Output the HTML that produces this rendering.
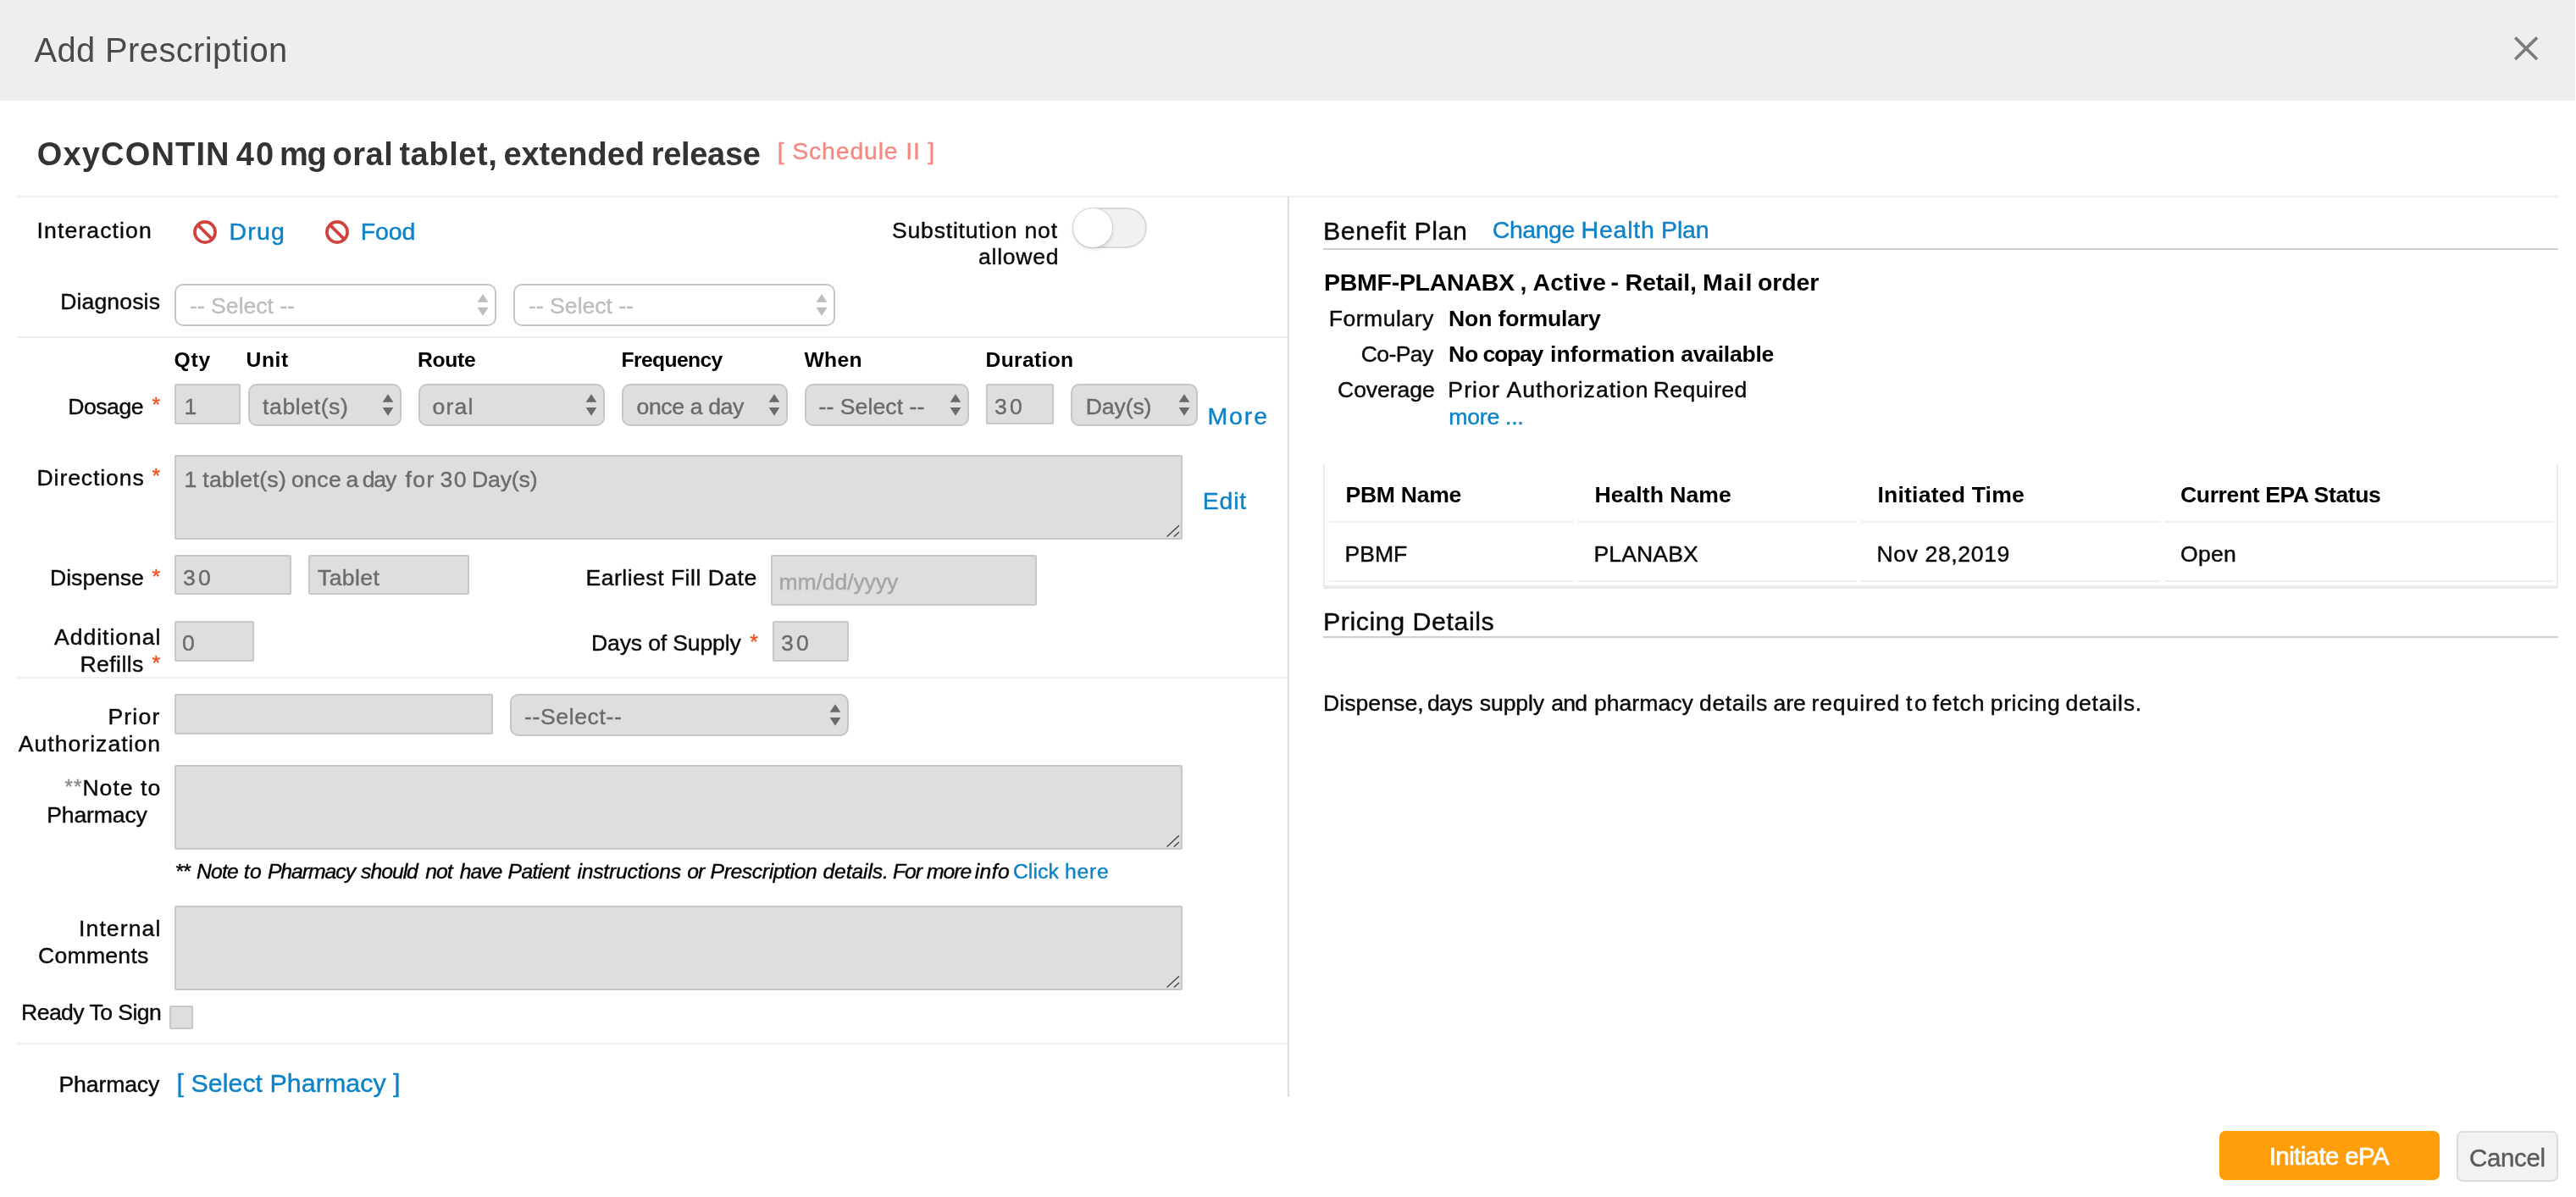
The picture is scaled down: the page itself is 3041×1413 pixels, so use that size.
<!DOCTYPE html>
<html><head><meta charset="utf-8"><title>Add Prescription</title>
<style>
html,body{margin:0;padding:0;background:#fff;}
body{width:3041px;height:1413px;position:relative;overflow:hidden;font-family:"Liberation Sans",sans-serif;}
#root{position:absolute;left:0;top:0;width:3041px;height:1413px;will-change:transform;}
.t{position:absolute;white-space:pre;-webkit-text-stroke:0.4px currentColor;}
.a,.hdr,.hl,.hl2,.vl,.ul,.inp,.wsel,.gsel,.tbl,.cl,.bt1,.bt2{position:absolute;box-sizing:border-box;}
.hdr{background:#eeeeee;}
.hl{background:#eeeeee;}
.hl2{background:#eeeef4;}
.vl{background:#dddddd;}
.ul{background:#cfcfcf;}
.inp{background:#dedede;border:2px solid #c7c7c7;border-radius:2px;}
.wsel{background:#fff;border:2px solid #c6c6c6;border-radius:10px;}
.gsel{background:#dedede;border:2px solid #c6c6c6;border-radius:10px;}
.tog{background:#f1f1f1;border:2px solid #d8d8d8;border-radius:24px;}
.knob{position:absolute;left:-1px;top:-1px;width:45.5px;height:45.5px;border-radius:50%;background:#fff;box-shadow:0 2px 5px rgba(0,0,0,.15),0 0 0 1px #dedede;}
.tbl{border-left:2px solid #ececec;border-right:2px solid #ececec;border-bottom:4px solid #ebebeb;}
.cl{background:#efefef;}
.bt1{background:#ff9e08;border-radius:7px;}
.bt2{background:#f2f2f2;border:2px solid #dcdcdc;border-radius:7px;}
</style></head><body><div id="root">
<div class="hdr" style="left:0px;top:0px;width:3040px;height:119px;"></div>
<svg class="a" style="left:2962px;top:37px" width="40" height="40" viewBox="0 0 40 40"><path d="M7.2 7.4 L33 33 M33 7.4 L7.2 33" stroke="#7b7b7b" stroke-width="3.6" fill="none"/></svg>
<div class="hl" style="left:20px;top:231px;width:3000px;height:2px;"></div>
<div class="hl2" style="left:20px;top:397px;width:1500px;height:2px;"></div>
<div class="hl" style="left:20px;top:799px;width:1500px;height:2px;"></div>
<div class="hl" style="left:20px;top:1231px;width:1500px;height:2px;"></div>
<div class="vl" style="left:1520px;top:232px;width:2px;height:1063px;"></div>
<svg class="a" style="left:226px;top:258px" width="32" height="32" viewBox="0 0 32 32"><circle cx="16" cy="16" r="12.1" fill="none" stroke="#d2423c" stroke-width="3.7"/><path d="M7.6 7.6 L24.4 24.4" stroke="#d2423c" stroke-width="3.7"/></svg>
<svg class="a" style="left:382px;top:258px" width="32" height="32" viewBox="0 0 32 32"><circle cx="16" cy="16" r="12.1" fill="none" stroke="#d2423c" stroke-width="3.7"/><path d="M7.6 7.6 L24.4 24.4" stroke="#d2423c" stroke-width="3.7"/></svg>
<div class="a tog" style="left:1266px;top:245px;width:87.5px;height:47.5px"><div class="knob"></div></div>
<div class="wsel" style="left:206px;top:335px;width:380px;height:50px;"></div><svg class="a" style="left:562px;top:346.0px" width="16" height="28" viewBox="0 0 16 28"><path d="M8 1.2 L14.4 10.8 L1.6 10.8 Z M8 26.8 L14.4 17 L1.6 17 Z" fill="#bdbdbd"/></svg>
<div class="wsel" style="left:606px;top:335px;width:380px;height:50px;"></div><svg class="a" style="left:962px;top:346.0px" width="16" height="28" viewBox="0 0 16 28"><path d="M8 1.2 L14.4 10.8 L1.6 10.8 Z M8 26.8 L14.4 17 L1.6 17 Z" fill="#bdbdbd"/></svg>
<div class="inp" style="left:206px;top:453px;width:78px;height:48px;"></div>
<div class="gsel" style="left:293px;top:453px;width:181px;height:50px;"></div><svg class="a" style="left:450px;top:464.0px" width="16" height="28" viewBox="0 0 16 28"><path d="M8 1.2 L14.4 10.8 L1.6 10.8 Z M8 26.8 L14.4 17 L1.6 17 Z" fill="#6a6a6a"/></svg>
<div class="gsel" style="left:494px;top:453px;width:220px;height:50px;"></div><svg class="a" style="left:690px;top:464.0px" width="16" height="28" viewBox="0 0 16 28"><path d="M8 1.2 L14.4 10.8 L1.6 10.8 Z M8 26.8 L14.4 17 L1.6 17 Z" fill="#6a6a6a"/></svg>
<div class="gsel" style="left:734px;top:453px;width:196px;height:50px;"></div><svg class="a" style="left:906px;top:464.0px" width="16" height="28" viewBox="0 0 16 28"><path d="M8 1.2 L14.4 10.8 L1.6 10.8 Z M8 26.8 L14.4 17 L1.6 17 Z" fill="#6a6a6a"/></svg>
<div class="gsel" style="left:950px;top:453px;width:194px;height:50px;"></div><svg class="a" style="left:1120px;top:464.0px" width="16" height="28" viewBox="0 0 16 28"><path d="M8 1.2 L14.4 10.8 L1.6 10.8 Z M8 26.8 L14.4 17 L1.6 17 Z" fill="#6a6a6a"/></svg>
<div class="inp" style="left:1164px;top:453px;width:80px;height:48px;"></div>
<div class="gsel" style="left:1264px;top:453px;width:150px;height:50px;"></div><svg class="a" style="left:1390px;top:464.0px" width="16" height="28" viewBox="0 0 16 28"><path d="M8 1.2 L14.4 10.8 L1.6 10.8 Z M8 26.8 L14.4 17 L1.6 17 Z" fill="#6a6a6a"/></svg>
<div class="inp" style="left:206px;top:537px;width:1190px;height:100px;"></div><svg class="a" style="left:1375px;top:616px" width="20" height="20" viewBox="0 0 20 20"><path d="M2.6 17.6 L17 4.3 M10.9 17.6 L17 12.1" stroke="#444" stroke-width="1.4" fill="none"/></svg>
<div class="inp" style="left:206px;top:655px;width:138px;height:47px;"></div>
<div class="inp" style="left:364px;top:655px;width:190px;height:47px;"></div>
<div class="inp" style="left:910px;top:655px;width:314px;height:60px;"></div>
<div class="inp" style="left:206px;top:733px;width:94px;height:48px;"></div>
<div class="inp" style="left:912px;top:733px;width:90px;height:48px;"></div>
<div class="inp" style="left:206px;top:819px;width:376px;height:48px;"></div>
<div class="gsel" style="left:602px;top:819px;width:400px;height:50px;"></div><svg class="a" style="left:978px;top:830.0px" width="16" height="28" viewBox="0 0 16 28"><path d="M8 1.2 L14.4 10.8 L1.6 10.8 Z M8 26.8 L14.4 17 L1.6 17 Z" fill="#6a6a6a"/></svg>
<div class="inp" style="left:206px;top:903px;width:1190px;height:100px;"></div><svg class="a" style="left:1375px;top:982px" width="20" height="20" viewBox="0 0 20 20"><path d="M2.6 17.6 L17 4.3 M10.9 17.6 L17 12.1" stroke="#444" stroke-width="1.4" fill="none"/></svg>
<div class="inp" style="left:206px;top:1069px;width:1190px;height:100px;"></div><svg class="a" style="left:1375px;top:1148px" width="20" height="20" viewBox="0 0 20 20"><path d="M2.6 17.6 L17 4.3 M10.9 17.6 L17 12.1" stroke="#444" stroke-width="1.4" fill="none"/></svg>
<div class="inp" style="left:200px;top:1187px;width:28px;height:28px;"></div>
<div class="ul" style="left:1562px;top:293px;width:1458px;height:2px;"></div>
<div class="ul" style="left:1562px;top:751px;width:1458px;height:2px;"></div>
<div class="tbl" style="left:1562px;top:547px;width:1458px;height:148px;"></div>
<div class="cl" style="left:1569px;top:615px;width:289px;height:2px;"></div>
<div class="cl" style="left:1569px;top:685px;width:289px;height:2px;"></div>
<div class="cl" style="left:1863px;top:615px;width:329px;height:2px;"></div>
<div class="cl" style="left:1863px;top:685px;width:329px;height:2px;"></div>
<div class="cl" style="left:2197px;top:615px;width:353px;height:2px;"></div>
<div class="cl" style="left:2197px;top:685px;width:353px;height:2px;"></div>
<div class="cl" style="left:2555px;top:615px;width:459px;height:2px;"></div>
<div class="cl" style="left:2555px;top:685px;width:459px;height:2px;"></div>
<div class="bt1" style="left:2620px;top:1335px;width:260px;height:58px;"></div>
<div class="bt2" style="left:2900px;top:1335px;width:120px;height:60px;"></div>
<span class="t" style="left:40.4px;top:35px;font-size:39.9px;line-height:48px;color:#4a4a4a;letter-spacing:0.41px;-webkit-text-stroke:0;">Add Prescription</span>
<span class="t" style="left:43.8px;top:159px;font-size:38px;line-height:46px;color:#333;font-weight:700;-webkit-text-stroke:0;letter-spacing:1.16px;">OxyCONTIN</span>
<span class="t" style="left:278.7px;top:159px;font-size:38px;line-height:46px;color:#333;font-weight:700;-webkit-text-stroke:0;letter-spacing:2.27px;">40</span>
<span class="t" style="left:330.0px;top:159px;font-size:38px;line-height:46px;color:#333;font-weight:700;-webkit-text-stroke:0;letter-spacing:-1.19px;">mg</span>
<span class="t" style="left:392.5px;top:159px;font-size:38px;line-height:46px;color:#333;font-weight:700;-webkit-text-stroke:0;letter-spacing:0.52px;">oral</span>
<span class="t" style="left:471.4px;top:159px;font-size:38px;line-height:46px;color:#333;font-weight:700;-webkit-text-stroke:0;letter-spacing:0.58px;">tablet,</span>
<span class="t" style="left:594.4px;top:159px;font-size:38px;line-height:46px;color:#333;font-weight:700;-webkit-text-stroke:0;letter-spacing:-0.04px;">extended</span>
<span class="t" style="left:768.7px;top:159px;font-size:38px;line-height:46px;color:#333;font-weight:700;-webkit-text-stroke:0;letter-spacing:-0.30px;">release</span>
<span class="t" style="left:917.8px;top:161px;font-size:28.5px;line-height:34px;color:#f58a82;letter-spacing:0.80px;">[ Schedule II ]</span>
<span class="t" style="left:43.5px;top:256px;font-size:26.6px;line-height:32px;color:#0a0a0a;letter-spacing:1.11px;">Interaction</span>
<span class="t" style="left:270.6px;top:256px;font-size:28.5px;line-height:34px;color:#0d82c8;letter-spacing:1.16px;">Drug</span>
<span class="t" style="left:425.7px;top:256px;font-size:28.5px;line-height:34px;color:#0d82c8;letter-spacing:-0.14px;">Food</span>
<span class="t" style="left:1053.0px;top:256px;font-size:26.6px;line-height:32px;color:#0a0a0a;letter-spacing:0.78px;">Substitution not</span>
<span class="t" style="left:1155.0px;top:287px;font-size:26.6px;line-height:32px;color:#0a0a0a;letter-spacing:0.72px;">allowed</span>
<span class="t" style="left:71.2px;top:340px;font-size:26.6px;line-height:32px;color:#0a0a0a;letter-spacing:0.12px;">Diagnosis</span>
<span class="t" style="left:224.0px;top:345px;font-size:26.6px;line-height:32px;color:#bdbdbd;">-- Select --</span>
<span class="t" style="left:624.0px;top:345px;font-size:26.6px;line-height:32px;color:#bdbdbd;">-- Select --</span>
<span class="t" style="left:205.5px;top:410px;font-size:24.7px;line-height:30px;color:#000;font-weight:700;-webkit-text-stroke:0;letter-spacing:0.79px;">Qty</span>
<span class="t" style="left:290.5px;top:410px;font-size:24.7px;line-height:30px;color:#000;font-weight:700;-webkit-text-stroke:0;letter-spacing:0.58px;">Unit</span>
<span class="t" style="left:493.0px;top:410px;font-size:24.7px;line-height:30px;color:#000;font-weight:700;-webkit-text-stroke:0;letter-spacing:-0.30px;">Route</span>
<span class="t" style="left:733.5px;top:410px;font-size:24.7px;line-height:30px;color:#000;font-weight:700;-webkit-text-stroke:0;letter-spacing:-0.64px;">Frequency</span>
<span class="t" style="left:949.5px;top:410px;font-size:24.7px;line-height:30px;color:#000;font-weight:700;-webkit-text-stroke:0;letter-spacing:0.30px;">When</span>
<span class="t" style="left:1163.5px;top:410px;font-size:24.7px;line-height:30px;color:#000;font-weight:700;-webkit-text-stroke:0;letter-spacing:0.30px;">Duration</span>
<span class="t" style="left:80.3px;top:464px;font-size:26.6px;line-height:32px;color:#0a0a0a;letter-spacing:-0.49px;">Dosage</span>
<span class="t" style="left:217.5px;top:464px;font-size:26.6px;line-height:32px;color:#6b6b6b;">1</span>
<span class="t" style="left:310.0px;top:464px;font-size:26.6px;line-height:32px;color:#6b6b6b;letter-spacing:0.60px;">tablet(s)</span>
<span class="t" style="left:510.5px;top:464px;font-size:26.6px;line-height:32px;color:#6b6b6b;letter-spacing:1.19px;">oral</span>
<span class="t" style="left:751.5px;top:464px;font-size:26.6px;line-height:32px;color:#6b6b6b;letter-spacing:-0.37px;">once a day</span>
<span class="t" style="left:966.5px;top:464px;font-size:26.6px;line-height:32px;color:#6b6b6b;letter-spacing:0.07px;">-- Select --</span>
<span class="t" style="left:1174.0px;top:464px;font-size:26.6px;line-height:32px;color:#6b6b6b;letter-spacing:3.21px;">30</span>
<span class="t" style="left:1281.8px;top:464px;font-size:26.6px;line-height:32px;color:#6b6b6b;letter-spacing:-0.13px;">Day(s)</span>
<span class="t" style="left:1425.4px;top:474px;font-size:28.5px;line-height:34px;color:#0d82c8;letter-spacing:1.91px;">More</span>
<span class="t" style="left:43.5px;top:548px;font-size:26.6px;line-height:32px;color:#0a0a0a;letter-spacing:0.89px;">Directions</span>
<span class="t" style="left:217.5px;top:550px;font-size:26.6px;line-height:32px;color:#6b6b6b;">1</span>
<span class="t" style="left:239.2px;top:550px;font-size:26.6px;line-height:32px;color:#6b6b6b;letter-spacing:0.32px;">tablet(s)</span>
<span class="t" style="left:343.9px;top:550px;font-size:26.6px;line-height:32px;color:#6b6b6b;letter-spacing:0.41px;">once</span>
<span class="t" style="left:408.5px;top:550px;font-size:26.6px;line-height:32px;color:#6b6b6b;">a</span>
<span class="t" style="left:427.7px;top:550px;font-size:26.6px;line-height:32px;color:#6b6b6b;letter-spacing:-1.19px;">day</span>
<span class="t" style="left:478.5px;top:550px;font-size:26.6px;line-height:32px;color:#6b6b6b;letter-spacing:1.46px;">for</span>
<span class="t" style="left:519.5px;top:550px;font-size:26.6px;line-height:32px;color:#6b6b6b;letter-spacing:1.51px;">30</span>
<span class="t" style="left:556.9px;top:550px;font-size:26.6px;line-height:32px;color:#6b6b6b;letter-spacing:-0.13px;">Day(s)</span>
<span class="t" style="left:1419.7px;top:574px;font-size:28.5px;line-height:34px;color:#0d82c8;letter-spacing:0.80px;">Edit</span>
<span class="t" style="left:59.0px;top:666px;font-size:26.6px;line-height:32px;color:#0a0a0a;letter-spacing:-0.01px;">Dispense</span>
<span class="t" style="left:216.0px;top:666px;font-size:26.6px;line-height:32px;color:#6b6b6b;letter-spacing:3.21px;">30</span>
<span class="t" style="left:375.0px;top:666px;font-size:26.6px;line-height:32px;color:#6b6b6b;letter-spacing:0.39px;">Tablet</span>
<span class="t" style="left:691.5px;top:666px;font-size:26.6px;line-height:32px;color:#0a0a0a;letter-spacing:0.48px;">Earliest Fill Date</span>
<span class="t" style="left:919.5px;top:671px;font-size:26.6px;line-height:32px;color:#a5a5a5;letter-spacing:-0.12px;">mm/dd/yyyy</span>
<span class="t" style="left:64.0px;top:736px;font-size:26.6px;line-height:32px;color:#0a0a0a;letter-spacing:0.96px;">Additional</span>
<span class="t" style="left:94.5px;top:768px;font-size:26.6px;line-height:32px;color:#0a0a0a;letter-spacing:0.40px;">Refills</span>
<span class="t" style="left:215.0px;top:743px;font-size:26.6px;line-height:32px;color:#6b6b6b;">0</span>
<span class="t" style="left:698.0px;top:743px;font-size:26.6px;line-height:32px;color:#0a0a0a;letter-spacing:-0.16px;">Days of Supply</span>
<span class="t" style="left:922.0px;top:743px;font-size:26.6px;line-height:32px;color:#6b6b6b;letter-spacing:3.21px;">30</span>
<span class="t" style="left:127.4px;top:830px;font-size:26.6px;line-height:32px;color:#0a0a0a;letter-spacing:1.18px;">Prior</span>
<span class="t" style="left:21.7px;top:862px;font-size:26.6px;line-height:32px;color:#0a0a0a;letter-spacing:1.02px;">Authorization</span>
<span class="t" style="left:619.0px;top:830px;font-size:26.6px;line-height:32px;color:#6b6b6b;letter-spacing:0.61px;">--Select--</span>
<span class="t" style="left:76.5px;top:914px;font-size:24px;line-height:29px;color:#8a8a8a;letter-spacing:1.16px;">**</span>
<span class="t" style="left:97.4px;top:914px;font-size:26.6px;line-height:32px;color:#0a0a0a;letter-spacing:1.01px;">Note to</span>
<span class="t" style="left:55.3px;top:946px;font-size:26.6px;line-height:32px;color:#0a0a0a;letter-spacing:-0.17px;">Pharmacy</span>
<span class="t" style="left:206.6px;top:1014px;font-size:24.7px;line-height:30px;color:#000;font-style:italic;letter-spacing:-1.00px;">**</span>
<span class="t" style="left:232.0px;top:1014px;font-size:24.7px;line-height:30px;color:#000;font-style:italic;letter-spacing:-0.84px;">Note</span>
<span class="t" style="left:287.7px;top:1014px;font-size:24.7px;line-height:30px;color:#000;font-style:italic;letter-spacing:0.44px;">to</span>
<span class="t" style="left:315.9px;top:1014px;font-size:24.7px;line-height:30px;color:#000;font-style:italic;letter-spacing:-1.00px;">Pharmacy</span>
<span class="t" style="left:426.1px;top:1014px;font-size:24.7px;line-height:30px;color:#000;font-style:italic;letter-spacing:-1.00px;">should</span>
<span class="t" style="left:502.2px;top:1014px;font-size:24.7px;line-height:30px;color:#000;font-style:italic;letter-spacing:-1.00px;">not</span>
<span class="t" style="left:542.8px;top:1014px;font-size:24.7px;line-height:30px;color:#000;font-style:italic;letter-spacing:-1.00px;">have</span>
<span class="t" style="left:599.6px;top:1014px;font-size:24.7px;line-height:30px;color:#000;font-style:italic;letter-spacing:-0.62px;">Patient</span>
<span class="t" style="left:681.4px;top:1014px;font-size:24.7px;line-height:30px;color:#000;font-style:italic;letter-spacing:-0.20px;">instructions</span>
<span class="t" style="left:811.3px;top:1014px;font-size:24.7px;line-height:30px;color:#000;font-style:italic;letter-spacing:-1.00px;">or</span>
<span class="t" style="left:838.6px;top:1014px;font-size:24.7px;line-height:30px;color:#000;font-style:italic;letter-spacing:-0.38px;">Prescription</span>
<span class="t" style="left:971.5px;top:1014px;font-size:24.7px;line-height:30px;color:#000;font-style:italic;letter-spacing:-0.12px;">details.</span>
<span class="t" style="left:1054.0px;top:1014px;font-size:24.7px;line-height:30px;color:#000;font-style:italic;letter-spacing:-1.00px;">For</span>
<span class="t" style="left:1093.9px;top:1014px;font-size:24.7px;line-height:30px;color:#000;font-style:italic;letter-spacing:-1.00px;">more</span>
<span class="t" style="left:1150.7px;top:1014px;font-size:24.7px;line-height:30px;color:#000;font-style:italic;letter-spacing:0.41px;">info</span>
<span class="t" style="left:1195.9px;top:1014px;font-size:24.7px;line-height:30px;color:#0d82c8;letter-spacing:0.09px;">Click</span>
<span class="t" style="left:1256.9px;top:1014px;font-size:24.7px;line-height:30px;color:#0d82c8;letter-spacing:0.77px;">here</span>
<span class="t" style="left:93.0px;top:1080px;font-size:26.6px;line-height:32px;color:#0a0a0a;letter-spacing:1.10px;">Internal</span>
<span class="t" style="left:45.0px;top:1112px;font-size:26.6px;line-height:32px;color:#0a0a0a;letter-spacing:0.25px;">Comments</span>
<span class="t" style="left:25.0px;top:1179px;font-size:26.6px;line-height:32px;color:#0a0a0a;letter-spacing:-0.56px;">Ready To Sign</span>
<span class="t" style="left:69.5px;top:1264px;font-size:26.6px;line-height:32px;color:#0a0a0a;letter-spacing:-0.13px;">Pharmacy</span>
<span class="t" style="left:208.5px;top:1260px;font-size:30.4px;line-height:36px;color:#0d82c8;letter-spacing:0.03px;">[ Select Pharmacy ]</span>
<span class="t" style="left:179.5px;top:463px;font-size:24.5px;line-height:29px;color:#f4511e;">*</span>
<span class="t" style="left:179.5px;top:547px;font-size:24.5px;line-height:29px;color:#f4511e;">*</span>
<span class="t" style="left:179.5px;top:666px;font-size:24.5px;line-height:29px;color:#f4511e;">*</span>
<span class="t" style="left:179.5px;top:768px;font-size:24.5px;line-height:29px;color:#f4511e;">*</span>
<span class="t" style="left:885.3px;top:743px;font-size:24.5px;line-height:29px;color:#f4511e;">*</span>
<span class="t" style="left:1562.0px;top:254px;font-size:30.4px;line-height:36px;color:#0a0a0a;letter-spacing:0.54px;">Benefit Plan</span>
<span class="t" style="left:1761.8px;top:254px;font-size:28.5px;line-height:34px;color:#0d82c8;letter-spacing:-0.46px;">Change</span>
<span class="t" style="left:1866.5px;top:254px;font-size:28.5px;line-height:34px;color:#0d82c8;letter-spacing:0.81px;">Health</span>
<span class="t" style="left:1961.0px;top:254px;font-size:28.5px;line-height:34px;color:#0d82c8;letter-spacing:-0.13px;">Plan</span>
<span class="t" style="left:1563.0px;top:316px;font-size:28.5px;line-height:34px;color:#000;font-weight:700;-webkit-text-stroke:0;letter-spacing:-0.27px;">PBMF-PLANABX</span>
<span class="t" style="left:1794.5px;top:316px;font-size:28.5px;line-height:34px;color:#000;font-weight:700;-webkit-text-stroke:0;">,</span>
<span class="t" style="left:1809.5px;top:316px;font-size:28.5px;line-height:34px;color:#000;font-weight:700;-webkit-text-stroke:0;letter-spacing:0.16px;">Active</span>
<span class="t" style="left:1901.5px;top:316px;font-size:28.5px;line-height:34px;color:#000;font-weight:700;-webkit-text-stroke:0;">-</span>
<span class="t" style="left:1918.6px;top:316px;font-size:28.5px;line-height:34px;color:#000;font-weight:700;-webkit-text-stroke:0;letter-spacing:-0.20px;">Retail,</span>
<span class="t" style="left:2010.0px;top:316px;font-size:28.5px;line-height:34px;color:#000;font-weight:700;-webkit-text-stroke:0;letter-spacing:1.00px;">Mail</span>
<span class="t" style="left:2075.1px;top:316px;font-size:28.5px;line-height:34px;color:#000;font-weight:700;-webkit-text-stroke:0;letter-spacing:-0.14px;">order</span>
<span class="t" style="left:1568.7px;top:360px;font-size:26.6px;line-height:32px;color:#0a0a0a;letter-spacing:0.49px;">Formulary</span>
<span class="t" style="left:1710.0px;top:360px;font-size:26.6px;line-height:32px;color:#000;font-weight:700;-webkit-text-stroke:0;letter-spacing:-0.16px;">Non formulary</span>
<span class="t" style="left:1606.7px;top:402px;font-size:26.6px;line-height:32px;color:#0a0a0a;letter-spacing:-0.62px;">Co-Pay</span>
<span class="t" style="left:1710.0px;top:402px;font-size:26.6px;line-height:32px;color:#000;font-weight:700;-webkit-text-stroke:0;letter-spacing:-0.21px;">No</span>
<span class="t" style="left:1750.5px;top:402px;font-size:26.6px;line-height:32px;color:#000;font-weight:700;-webkit-text-stroke:0;letter-spacing:-1.27px;">copay</span>
<span class="t" style="left:1830.0px;top:402px;font-size:26.6px;line-height:32px;color:#000;font-weight:700;-webkit-text-stroke:0;letter-spacing:0.10px;">information</span>
<span class="t" style="left:1984.2px;top:402px;font-size:26.6px;line-height:32px;color:#000;font-weight:700;-webkit-text-stroke:0;letter-spacing:-0.28px;">available</span>
<span class="t" style="left:1579.0px;top:444px;font-size:26.6px;line-height:32px;color:#0a0a0a;letter-spacing:-0.07px;">Coverage</span>
<span class="t" style="left:1709.3px;top:444px;font-size:26.6px;line-height:32px;color:#0a0a0a;letter-spacing:1.10px;">Prior</span>
<span class="t" style="left:1778.5px;top:444px;font-size:26.6px;line-height:32px;color:#0a0a0a;letter-spacing:0.98px;">Authorization</span>
<span class="t" style="left:1951.8px;top:444px;font-size:26.6px;line-height:32px;color:#0a0a0a;letter-spacing:0.37px;">Required</span>
<span class="t" style="left:1710.3px;top:476px;font-size:26.6px;line-height:32px;color:#0d82c8;letter-spacing:-0.24px;">more ...</span>
<span class="t" style="left:1588.5px;top:568px;font-size:26.6px;line-height:32px;color:#000;font-weight:700;-webkit-text-stroke:0;letter-spacing:-0.30px;">PBM Name</span>
<span class="t" style="left:1882.5px;top:568px;font-size:26.6px;line-height:32px;color:#000;font-weight:700;-webkit-text-stroke:0;letter-spacing:0.02px;">Health Name</span>
<span class="t" style="left:2216.5px;top:568px;font-size:26.6px;line-height:32px;color:#000;font-weight:700;-webkit-text-stroke:0;letter-spacing:0.18px;">Initiated Time</span>
<span class="t" style="left:2574.0px;top:568px;font-size:26.6px;line-height:32px;color:#000;font-weight:700;-webkit-text-stroke:0;letter-spacing:-0.41px;">Current EPA Status</span>
<span class="t" style="left:1587.5px;top:638px;font-size:26.6px;line-height:32px;color:#0a0a0a;letter-spacing:-0.04px;">PBMF</span>
<span class="t" style="left:1881.5px;top:638px;font-size:26.6px;line-height:32px;color:#0a0a0a;letter-spacing:0.09px;">PLANABX</span>
<span class="t" style="left:2215.5px;top:638px;font-size:26.6px;line-height:32px;color:#0a0a0a;letter-spacing:0.60px;">Nov 28,2019</span>
<span class="t" style="left:2574.0px;top:638px;font-size:26.6px;line-height:32px;color:#0a0a0a;letter-spacing:0.24px;">Open</span>
<span class="t" style="left:1562.0px;top:715px;font-size:30.4px;line-height:36px;color:#0a0a0a;letter-spacing:0.53px;">Pricing Details</span>
<span class="t" style="left:1561.9px;top:814px;font-size:26.6px;line-height:32px;color:#0a0a0a;letter-spacing:0.07px;">Dispense,</span>
<span class="t" style="left:1685.0px;top:814px;font-size:26.6px;line-height:32px;color:#0a0a0a;letter-spacing:-0.83px;">days</span>
<span class="t" style="left:1746.8px;top:814px;font-size:26.6px;line-height:32px;color:#0a0a0a;letter-spacing:-0.12px;">supply</span>
<span class="t" style="left:1831.2px;top:814px;font-size:26.6px;line-height:32px;color:#0a0a0a;letter-spacing:-0.74px;">and</span>
<span class="t" style="left:1882.0px;top:814px;font-size:26.6px;line-height:32px;color:#0a0a0a;">pharmacy</span>
<span class="t" style="left:2006.1px;top:814px;font-size:26.6px;line-height:32px;color:#0a0a0a;letter-spacing:0.57px;">details</span>
<span class="t" style="left:2093.6px;top:814px;font-size:26.6px;line-height:32px;color:#0a0a0a;letter-spacing:-0.17px;">are</span>
<span class="t" style="left:2138.4px;top:814px;font-size:26.6px;line-height:32px;color:#0a0a0a;letter-spacing:0.90px;">required</span>
<span class="t" style="left:2250.0px;top:814px;font-size:26.6px;line-height:32px;color:#0a0a0a;letter-spacing:2.51px;">to</span>
<span class="t" style="left:2281.4px;top:814px;font-size:26.6px;line-height:32px;color:#0a0a0a;letter-spacing:0.88px;">fetch</span>
<span class="t" style="left:2349.8px;top:814px;font-size:26.6px;line-height:32px;color:#0a0a0a;letter-spacing:0.59px;">pricing</span>
<span class="t" style="left:2438.4px;top:814px;font-size:26.6px;line-height:32px;color:#0a0a0a;letter-spacing:0.80px;">details.</span>
<span class="t" style="left:2678.8px;top:1347px;font-size:29.5px;line-height:35px;color:#fff;letter-spacing:-0.62px;-webkit-text-stroke:0.7px #fff;">Initiate ePA</span>
<span class="t" style="left:2915.0px;top:1349px;font-size:29.5px;line-height:35px;color:#5a5a5a;letter-spacing:-0.37px;">Cancel</span>
</div></body></html>
